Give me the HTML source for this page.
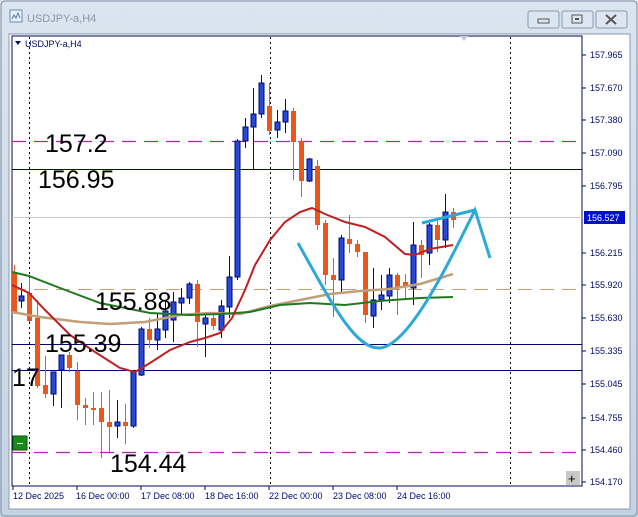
<!DOCTYPE html>
<html><head><meta charset="utf-8"><style>
html,body{margin:0;padding:0;width:638px;height:517px;overflow:hidden;background:#bccbdb;font-family:"Liberation Sans",sans-serif}
</style></head><body>
<svg width="638" height="517" viewBox="0 0 638 517" xmlns="http://www.w3.org/2000/svg" font-family="Liberation Sans, sans-serif">
<defs><linearGradient id="tb" x1="0" y1="0" x2="0" y2="1"><stop offset="0" stop-color="#dbe5f0"/><stop offset="1" stop-color="#c4d3e3"/></linearGradient></defs>
<rect x="0" y="0" width="638" height="517" fill="url(#tb)"/>
<rect x="1" y="1" width="636" height="515" fill="none" stroke="#7f8fa3" rx="4"/>
<rect x="10" y="10" width="12" height="12" fill="#e8f0f8" stroke="#6a8ab0"/>
<path d="M12,19 l2,-4 l2,3 l2,-5 l2,5" stroke="#4a7ab0" fill="none"/>
<text x="27" y="22" font-size="11" fill="#8a97a6">USDJPY-a,H4</text>
<g fill="#dde6f0" stroke="#8a99ab"><rect x="528" y="11" width="31" height="17" rx="2"/><rect x="562" y="11" width="31" height="17" rx="2"/><rect x="596" y="11" width="31" height="17" rx="2"/></g>
<rect x="538" y="19" width="11" height="4" fill="none" stroke="#555"/>
<rect x="572" y="15" width="10" height="8" fill="none" stroke="#555"/><rect x="575" y="18" width="4" height="2" fill="#555"/>
<path d="M606,15 l10,9 M616,15 l-10,9" stroke="#555" stroke-width="2"/>
<rect x="9" y="34" width="621" height="475" fill="#fff" stroke="#8d9bb0"/>
<rect x="12" y="36" width="570" height="450" fill="#fff" stroke="#000a5a"/>
<g stroke="#000" stroke-dasharray="2,3"><line x1="29.5" y1="37" x2="29.5" y2="486"/><line x1="270.5" y1="37" x2="270.5" y2="486"/><line x1="510.5" y1="37" x2="510.5" y2="486"/></g>
<line x1="12" y1="141.5" x2="582" y2="141.5" stroke="#b820b8" stroke-width="1.2" stroke-dasharray="14,8"/>
<line x1="12" y1="169.5" x2="582" y2="169.5" stroke="#000a6a"/>
<line x1="12" y1="217.5" x2="582" y2="217.5" stroke="#c8c8c8"/>
<line x1="12" y1="289.5" x2="582" y2="289.5" stroke="#c8a070" stroke-dasharray="14,8"/>
<line x1="12" y1="344.5" x2="582" y2="344.5" stroke="#000a6a"/>
<line x1="12" y1="370.5" x2="582" y2="370.5" stroke="#000a6a"/>
<line x1="12" y1="452.5" x2="582" y2="452.5" stroke="#b820b8" stroke-width="1.2" stroke-dasharray="14,8"/>
<g id="cd"></g>
<polyline fill="none" stroke="#c0a07a" stroke-width="2.5" points="12,312 40,317 80,322 110,324 145,322 180,315 210,313 240,314 270,306 300,300 330,294 360,291 390,289 420,284 440,278 453,274"/>
<polyline fill="none" stroke="#1f7a1f" stroke-width="2" points="12,272 29,276 60,288 100,303 150,313 190,315 220,314 250,312 280,305 310,303 345,305 380,301 420,298 453,297"/>
<polyline fill="none" stroke="#c02020" stroke-width="2" points="12,285 29,293 45,310 70,335 95,352 120,368 135,372 150,363 170,350 190,342 205,338 220,333 232,318 245,290 255,265 270,240 285,222 300,212 312,208 325,214 345,222 365,227 385,237 405,254 415,255 430,249 453,245"/>
<path d="M298,243 C330,300 355,350 380,348 C410,345 450,260 475,210 L490,258" fill="none" stroke="#2ea8d8" stroke-width="3"/>
<line x1="422" y1="223" x2="475" y2="210" stroke="#2ea8d8" stroke-width="3"/>
<g font-size="25" fill="#000"><text x="45" y="152">157.2</text><text x="38" y="188">156.95</text><text x="95" y="310">155.88</text><text x="45" y="352">155.39</text><text x="12" y="386">17</text><text x="110" y="472">154.44</text></g>
<path d="M15,41 l6,0 l-3,4z" fill="#000a6a"/>
<text x="25" y="47" font-size="9" fill="#000a6a">USDJPY-a,H4</text>
<path d="M460,36 l8,0 l-4,5z" fill="#c0c8d0"/>
<rect x="13" y="436" width="14" height="14" fill="#1a8a1a" stroke="#0a5a0a"/><rect x="17" y="443" width="6" height="1" fill="#fff"/>
<rect x="566" y="471" width="14" height="14" fill="#c8c8c8"/><text x="568" y="483" font-size="13" fill="#000">+</text>
<g font-size="9" fill="#000a6a">
<text x="590" y="58">157.965</text><text x="590" y="91">157.670</text><text x="590" y="123">157.380</text><text x="590" y="156">157.090</text><text x="590" y="189">156.795</text><text x="590" y="256">156.215</text><text x="590" y="288">155.920</text><text x="590" y="321">155.630</text><text x="590" y="354">155.335</text><text x="590" y="387">155.045</text><text x="590" y="421">154.755</text><text x="590" y="453">154.460</text><text x="590" y="485">154.170</text>
</g>
<g stroke="#000a6a"><line x1="582" y1="55" x2="586" y2="55"/><line x1="582" y1="88" x2="586" y2="88"/><line x1="582" y1="120" x2="586" y2="120"/><line x1="582" y1="153" x2="586" y2="153"/><line x1="582" y1="186" x2="586" y2="186"/><line x1="582" y1="253" x2="586" y2="253"/><line x1="582" y1="285" x2="586" y2="285"/><line x1="582" y1="318" x2="586" y2="318"/><line x1="582" y1="351" x2="586" y2="351"/><line x1="582" y1="384" x2="586" y2="384"/><line x1="582" y1="418" x2="586" y2="418"/><line x1="582" y1="450" x2="586" y2="450"/><line x1="582" y1="482" x2="586" y2="482"/></g>
<rect x="584" y="211" width="41" height="13" fill="#0010c8"/><text x="587" y="221" font-size="9" fill="#fff">156.527</text>
<g font-size="9" fill="#000a6a"><text x="13" y="499">12 Dec 2025</text><text x="76" y="499">16 Dec 00:00</text><text x="141" y="499">17 Dec 08:00</text><text x="205" y="499">18 Dec 16:00</text><text x="269" y="499">22 Dec 00:00</text><text x="333" y="499">23 Dec 08:00</text><text x="397" y="499">24 Dec 16:00</text></g>
<g stroke="#000a6a"><line x1="13" y1="486" x2="13" y2="490"/><line x1="77" y1="486" x2="77" y2="490"/><line x1="141" y1="486" x2="141" y2="490"/><line x1="205" y1="486" x2="205" y2="490"/><line x1="269" y1="486" x2="269" y2="490"/><line x1="333" y1="486" x2="333" y2="490"/><line x1="397" y1="486" x2="397" y2="490"/></g>
</svg>
<script>
var C=[[14,'o',272,312,265,314],[21,'b',296,301,283,308],[29,'o',293,321,278,322],[37,'o',318,386,300,388],[45,'o',385,394,356,398],[53,'b',372,394,372,406],[61,'b',355,370,355,408],[69,'o',355,368,352,372],[77,'o',371,405,362,420],[85,'o',405,408,398,425],[93,'o',408,410,392,425],[101,'o',408,422,392,458],[109,'o',422,427,390,452],[117,'b',422,426,400,438],[125,'o',422,426,404,444],[133,'b',372,426,370,428],[141,'b',329,375,327,376],[149,'o',329,340,318,348],[157,'b',329,340,313,350],[165,'b',311,330,300,338],[173,'b',302,320,292,342],[181,'b',298,303,288,316],[189,'b',284,298,282,304],[197,'o',284,322,280,347],[205,'b',318,324,312,357],[213,'o',318,326,312,330],[221,'b',306,330,300,338],[229,'b',277,307,256,318],[237,'b',141,277,139,280],[245,'b',127,141,118,148],[253,'b',114,127,88,170],[261,'b',83,114,75,118],[269,'o',106,131,83,135],[277,'b',122,130,110,138],[285,'b',111,122,99,133],[293,'o',111,142,108,180],[301,'o',141,181,138,197],[309,'b',159,181,158,182],[317,'o',166,225,160,230],[325,'o',223,275,220,285],[333,'o',275,280,258,317],[341,'b',238,280,235,292],[349,'o',239,244,215,253],[357,'o',244,252,240,257],[365,'o',252,315,252,323],[373,'b',300,316,268,328],[381,'b',295,300,275,310],[389,'b',275,296,268,303],[397,'o',275,288,273,315],[405,'o',282,287,274,300],[413,'b',245,288,222,305],[421,'o',245,255,240,278],[429,'b',225,253,223,265],[437,'o',225,240,220,252],[445,'b',212,240,194,248],[453,'o',212,220,208,228]];
var s='';C.forEach(function(c){var b=c[1]=='b';var col=b?'#2848d8':'#e8581c';var st=b?'#000a6a':'#e8581c';s+='<line x1="'+(c[0]+.5)+'" y1="'+c[4]+'" x2="'+(c[0]+.5)+'" y2="'+c[5]+'" stroke="'+st+'"/>';s+='<rect x="'+(c[0]-2)+'" y="'+c[2]+'" width="5" height="'+Math.max(2,c[3]-c[2])+'" fill="'+col+'" stroke="'+st+'" stroke-width="'+(b?1:0)+'"/>';});
document.getElementById('cd').innerHTML=s;
</script>
</body></html>
